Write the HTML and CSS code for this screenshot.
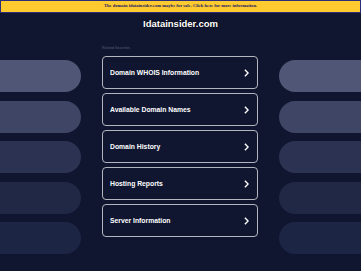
FILE: index.html
```html
<!DOCTYPE html>
<html>
<head>
<meta charset="utf-8">
<link rel="stylesheet" href="styles.css">
</head>
<body>
<div class="banner">The domain idatainsider.com maybe for sale. Click here for more information.</div>
<div class="title">Idatainsider.com</div>
<div class="main">
  <div class="side left">
    <div class="pill p1"></div>
    <div class="pill p2"></div>
    <div class="pill p3"></div>
    <div class="pill p4"></div>
    <div class="pill p5"></div>
  </div>
  <div class="center">
    <div class="related">Related Searches</div>
    <div class="list">
      <div class="item"><span>Domain WHOIS Information</span><svg class="chev" viewBox="0 0 6 10" width="5" height="8"><path d="M1 1 L5 5 L1 9" fill="none" stroke="#fff" stroke-width="1.8"/></svg></div>
      <div class="item"><span>Available Domain Names</span><svg class="chev" viewBox="0 0 6 10" width="5" height="8"><path d="M1 1 L5 5 L1 9" fill="none" stroke="#fff" stroke-width="1.8"/></svg></div>
      <div class="item"><span>Domain History</span><svg class="chev" viewBox="0 0 6 10" width="5" height="8"><path d="M1 1 L5 5 L1 9" fill="none" stroke="#fff" stroke-width="1.8"/></svg></div>
      <div class="item"><span>Hosting Reports</span><svg class="chev" viewBox="0 0 6 10" width="5" height="8"><path d="M1 1 L5 5 L1 9" fill="none" stroke="#fff" stroke-width="1.8"/></svg></div>
      <div class="item"><span>Server Information</span><svg class="chev" viewBox="0 0 6 10" width="5" height="8"><path d="M1 1 L5 5 L1 9" fill="none" stroke="#fff" stroke-width="1.8"/></svg></div>
    </div>
  </div>
  <div class="side right">
    <div class="pill p1"></div>
    <div class="pill p2"></div>
    <div class="pill p3"></div>
    <div class="pill p4"></div>
    <div class="pill p5"></div>
  </div>
</div>
</body>
</html>
```
FILE: styles.css
```css
html, body {
  margin: 0;
  padding: 0;
  background: #101630;
  height: 100%;
  overflow: hidden;
}
.banner {
  box-sizing: border-box;
  height: 13px;
  background: #fdca30;
  border: 1.5px solid #2a2d78;
  color: #1d2266;
  font-family: "Liberation Serif", serif;
  font-weight: bold;
  font-size: 4.6px;
  line-height: 10px;
  text-align: center;
}
.title {
  margin-top: 4px;
  height: 14px;
  text-align: center;
  color: #fff;
  font-family: "Liberation Sans", sans-serif;
  font-weight: bold;
  font-size: 9.5px;
  line-height: 14px;
  text-shadow: 0 0 2px #000;
}
.main {
  display: grid;
  grid-template-columns: 81px 1fr 82px;
}
.side {
  display: flex;
  flex-direction: column;
  gap: 8.5px;
  padding-top: 29px;
}
.pill {
  height: 32px;
}
.left .pill { border-radius: 0 16px 16px 0; }
.right .pill { border-radius: 16px 0 0 16px; }
.p1 { background: #4f5676; }
.p2 { background: #3e4565; }
.p3 { background: #2c3352; }
.p4 { background: #212846; }
.p5 { background: #1d2545; }
.center {
  padding: 0 21px;
}
.related {
  box-sizing: border-box;
  color: #5a6078;
  font-family: "Liberation Sans", sans-serif;
  font-size: 3.5px;
  height: 25px;
  line-height: 6px;
  padding-top: 14px;
}
.list {
  display: flex;
  flex-direction: column;
  gap: 4px;
}
.item {
  box-sizing: border-box;
  height: 33px;
  border: 1.5px solid #b4b6bf;
  border-radius: 4px;
  display: flex;
  align-items: center;
  justify-content: space-between;
  padding: 0 8px 0 7px;
  color: #fff;
  font-family: "Liberation Sans", sans-serif;
  font-weight: bold;
  font-size: 6.8px;
}
.chev { display: block; }
```
